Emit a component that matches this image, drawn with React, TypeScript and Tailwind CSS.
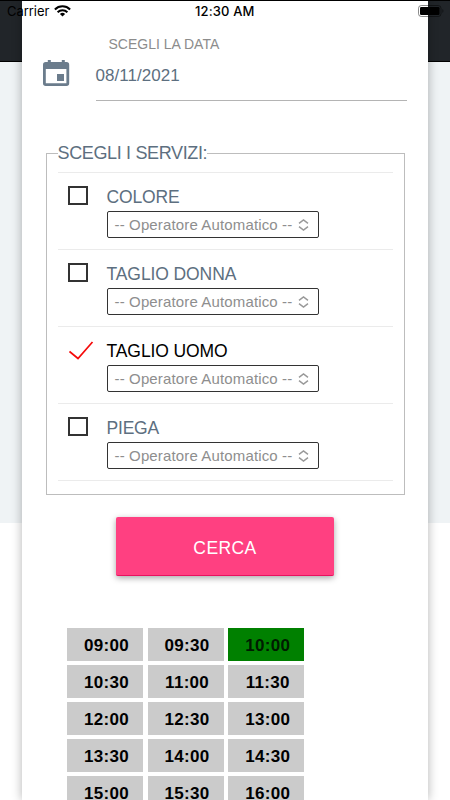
import clsx from 'clsx';

const SERVICES = [
  { name: 'COLORE', checked: false, textClass: 'tracking-[-0.15px]' },
  { name: 'TAGLIO DONNA', checked: false, textClass: 'tracking-[-0.1px]' },
  { name: 'TAGLIO UOMO', checked: true, textClass: 'tracking-[-0.1px]' },
  { name: 'PIEGA', checked: false, textClass: 'tracking-[-0.2px]' },
];

const TIMES = [
  '09:00', '09:30', '10:00',
  '10:30', '11:00', '11:30',
  '12:00', '12:30', '13:00',
  '13:30', '14:00', '14:30',
  '15:00', '15:30', '16:00',
];

const SELECTED_TIME = '10:00';

function StatusBar() {
  return (
    <div className="absolute inset-x-0 top-0 z-20 h-6 border-t border-black text-[13px] leading-[21px] text-black">
      <span className="absolute left-[7px] top-0 font-['Inter',sans-serif] tracking-[-0.05px]">Carrier</span>
      <svg className="absolute left-[54px] top-[4px]" width="17" height="12" viewBox="0 0 17 12" fill="none" stroke="#000">
        <path d="M0.9 4.4a10.9 10.9 0 0 1 15.2 0" strokeWidth="2.1" />
        <path d="M3.6 7.2a7 7 0 0 1 9.8 0" strokeWidth="2" />
        <path d="M8.5 11.6L5.9 9a3.8 3.8 0 0 1 5.2 0z" fill="#000" stroke="none" />
      </svg>
      <span className="absolute left-[195px] top-0 whitespace-nowrap font-['Inter',sans-serif] font-medium tracking-[0.15px]">
        12:30 AM
      </span>
      <svg className="absolute left-[418px] top-[4px]" width="27" height="12" viewBox="0 0 27 12">
        <rect x="0.5" y="0.5" width="22.5" height="11" rx="2.8" fill="none" stroke="#000" strokeOpacity="0.45" />
        <rect x="2" y="2" width="19.5" height="8" rx="1.2" fill="#000" />
        <path d="M24.4 4.1c1.4.6 1.4 3.2 0 3.8z" fill="#000" fillOpacity="0.5" />
      </svg>
    </div>
  );
}

function CalendarIcon() {
  return (
    <svg width="27" height="27" viewBox="0 0 27 27" fill="#6b7c8c">
      <path
        fillRule="evenodd"
        d="M4.8 0h3v2h11v-2h3v2H23.500A2.700 2.700 0 0 1 26.200 4.700v18.600A2.700 2.700 0 0 1 23.500 26H2.700A2.700 2.700 0 0 1 0 23.300V4.700A2.700 2.700 0 0 1 2.700 2H4.800zM2.800 9v14.300h20.600V9z"
      />
      <rect x="14" y="14" width="7" height="7" />
    </svg>
  );
}

function Mark({ checked }: { checked: boolean }) {
  if (checked) {
    return (
      <svg className="ml-[11px] mr-px mt-[14px] shrink-0" width="25" height="20" viewBox="0 0 25 20" fill="none" stroke="#f50a0a" strokeWidth="1.7">
        <path d="M0.500 10.500L9 17.500L23.500 1" />
      </svg>
    );
  }
  return <span className="ml-[10.5px] mr-[6.5px] mt-[13px] h-[19px] w-5 shrink-0 border-2 border-[#333]" />;
}

function OperatorSelect() {
  return (
    <div className="flex h-[27px] w-[212px] items-center rounded-[2px] border border-[#333] pl-[7px] text-[15px] text-[#8e8e8e]">
      <span className="whitespace-nowrap pt-px tracking-[0.14px]">-- Operatore Automatico --</span>
      <svg className="ml-[6px] shrink-0" width="11" height="12" viewBox="0 0 11 12" fill="none" stroke="#999" strokeWidth="1.5">
        <path d="M1 4.300L5.500 1L10 4.300M1 7.700L5.500 11L10 7.700" />
      </svg>
    </div>
  );
}

export default function App() {
  return (
    <div className="relative h-[800px] w-[450px] overflow-hidden bg-white font-['Liberation_Sans',Arial,sans-serif]">
      {/* page behind the sheet */}
      <div className="absolute inset-0">
        <div className="h-[62px] border-b border-black bg-[#212529]" />
        <div className="h-[461px] bg-[#eff3f5]" />
      </div>

      <StatusBar />

      <main className="relative mx-auto h-[800px] w-[406px] bg-white pt-[35px] shadow-[0_0_10px_rgba(0,0,0,0.3)]">
        <div className="flex h-[66px] pl-[21px]">
          <div className="mt-[25px] w-[52.5px]">
            <CalendarIcon />
          </div>
          <div className="w-[311px] border-b border-[#b4b4b4]">
            <p className="pl-[13px] text-[14px] leading-[18px] text-[#8c8c8c]">SCEGLI LA DATA</p>
            <p className="mt-[13px] text-[17px] leading-[20px] tracking-[0.05px] text-[#5d6f80]">08/11/2021</p>
          </div>
        </div>

        <fieldset className="ml-6 mt-[42px] h-[352px] w-[358.5px] border border-[#bdbdbd] px-[10.5px]">
          <legend className="h-[20px] text-[18px] leading-[20px] tracking-[-0.35px] text-[#5d6f80]">SCEGLI I SERVIZI:</legend>
          <ul className="mt-[9px] border-t border-[#ebebeb]">
            {SERVICES.map((service) => (
              <li key={service.name} className="flex h-[77.1px] border-b border-[#ebebeb]">
                <Mark checked={service.checked} />
                <div className="ml-3 pt-[14px]">
                  <p
                    className={clsx(
                      'text-[17.5px] leading-[20px]',
                      service.textClass,
                      service.checked ? 'text-black' : 'text-[#5d6f80]',
                    )}
                  >
                    {service.name}
                  </p>
                  <div className="mt-[4px]">
                    <OperatorSelect />
                  </div>
                </div>
              </li>
            ))}
          </ul>
        </fieldset>

        <button className="ml-[94px] mt-[22px] block h-[59px] w-[218px] rounded-[2px] border-b border-[#e8115f] bg-[#ff4081] pt-[4px] text-[17.5px] tracking-[0.4px] text-white shadow-[0_2px_6px_rgba(0,0,0,0.35)]">
          CERCA
        </button>

        <div className="ml-[45px] mt-[52px] grid grid-cols-[76px_76px_76px] gap-x-[4.6px] gap-y-[4px]">
          {TIMES.map((time) => (
            <div
              key={time}
              className={clsx(
                'flex h-[33px] items-center justify-center pl-[3px] pt-[2px] text-[17px] font-bold tracking-[0.3px]',
                time === SELECTED_TIME ? 'bg-[#008000] text-black/80' : 'bg-[#cbcbcb] text-black',
              )}
            >
              {time}
            </div>
          ))}
        </div>
      </main>
    </div>
  );
}
